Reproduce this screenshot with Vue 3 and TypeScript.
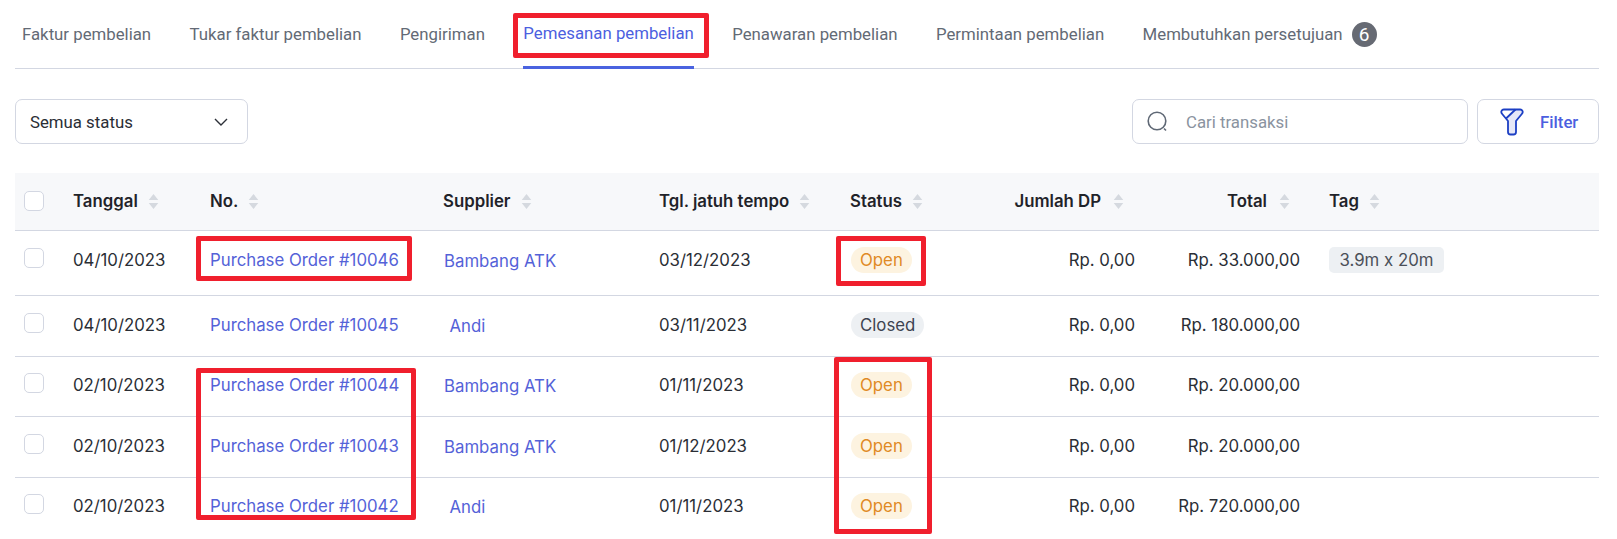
<script setup lang="ts">
interface Order {
  date: string
  no: string
  supplier: string
  indent: boolean
  due: string
  status: 'Open' | 'Closed'
  dp: string
  total: string
  tag?: string
}

const tabs = [
  { label: 'Faktur pembelian' },
  { label: 'Tukar faktur pembelian' },
  { label: 'Pengiriman' },
  { label: 'Pemesanan pembelian', active: true },
  { label: 'Penawaran pembelian' },
  { label: 'Permintaan pembelian' },
  { label: 'Membutuhkan persetujuan', count: 6 },
]

const columns = [
  { label: 'Tanggal', cls: 'c-date' },
  { label: 'No.', cls: 'c-no' },
  { label: 'Supplier', cls: 'c-supplier' },
  { label: 'Tgl. jatuh tempo', cls: 'c-due' },
  { label: 'Status', cls: 'c-status' },
  { label: 'Jumlah DP', cls: 'c-dp num' },
  { label: 'Total', cls: 'c-total num' },
  { label: 'Tag', cls: 'c-tag' },
]

const orders: Order[] = [
  { date: '04/10/2023', no: 'Purchase Order #10046', supplier: 'Bambang ATK', indent: false, due: '03/12/2023', status: 'Open', dp: 'Rp. 0,00', total: 'Rp. 33.000,00', tag: '3.9m x 20m' },
  { date: '04/10/2023', no: 'Purchase Order #10045', supplier: 'Andi', indent: true, due: '03/11/2023', status: 'Closed', dp: 'Rp. 0,00', total: 'Rp. 180.000,00' },
  { date: '02/10/2023', no: 'Purchase Order #10044', supplier: 'Bambang ATK', indent: false, due: '01/11/2023', status: 'Open', dp: 'Rp. 0,00', total: 'Rp. 20.000,00' },
  { date: '02/10/2023', no: 'Purchase Order #10043', supplier: 'Bambang ATK', indent: false, due: '01/12/2023', status: 'Open', dp: 'Rp. 0,00', total: 'Rp. 20.000,00' },
  { date: '02/10/2023', no: 'Purchase Order #10042', supplier: 'Andi', indent: true, due: '01/11/2023', status: 'Open', dp: 'Rp. 0,00', total: 'Rp. 720.000,00' },
]

// red markers drawn over the screenshot
const marks = [
  { cls: 'm-tab' },
  { cls: 'm-po1' },
  { cls: 'm-open1' },
  { cls: 'm-po2' },
  { cls: 'm-open2' },
]
</script>

<template>
  <div class="page">
    <nav class="tabs">
      <a v-for="t in tabs" :key="t.label" class="tab" :class="{ active: t.active }">
        {{ t.label }}
        <span v-if="t.count" class="count">{{ t.count }}</span>
      </a>
    </nav>

    <div class="toolbar">
      <div class="select">
        <span>Semua status</span>
        <svg width="16" height="16" viewBox="0 0 16 16" fill="none" stroke="#2c3038" stroke-width="1.4">
          <path d="M2 5l6 6 6-6" />
        </svg>
      </div>
      <div class="search">
        <svg width="24" height="24" viewBox="0 0 24 24" fill="none" stroke="#5f6875" stroke-width="1.6">
          <circle cx="10" cy="11" r="8.800" />
          <path d="M17 18.500l2 2" />
        </svg>
        <span>Cari transaksi</span>
      </div>
      <button type="button" class="filter">
        <svg width="24" height="28" viewBox="0 0 24 28" fill="none" stroke="#1c3fc4" stroke-width="1.800" stroke-linejoin="round">
          <path fill="#e6e8f8" stroke="none" d="M15.500 1.500H20a2.500 2.500 0 0 1 2 4.200L16 13v11a2.500 2.500 0 0 1-2.500 2.500h-3A2.500 2.500 0 0 1 8 24V13L6 10.500z" />
          <path d="M4 1.500h16a2.500 2.500 0 0 1 2 4.200L16 13v11a2.500 2.500 0 0 1-2.500 2.500h-3A2.500 2.500 0 0 1 8 24V13L2 5.700a2.500 2.500 0 0 1 2-4.200z" />
          <path d="M15.500 1.500L6 10.500" />
        </svg>
        <span>Filter</span>
      </button>
    </div>

    <table class="orders">
      <thead>
        <tr>
          <th class="c-check"><span class="check"></span></th>
          <th v-for="c in columns" :key="c.label" :class="c.cls">
            <span class="head">
              {{ c.label }}
              <svg class="sort" width="11" height="17" viewBox="0 0 10 16" fill="#d5d9df">
                <path d="M5 1l4.500 5.500H.5zM5 15L.5 9.500h9z" />
              </svg>
            </span>
          </th>
        </tr>
      </thead>
      <tbody>
        <tr v-for="o in orders" :key="o.no">
          <td class="c-check"><span class="check"></span></td>
          <td>{{ o.date }}</td>
          <td class="link">{{ o.no }}</td>
          <td class="link supplier" :class="{ indent: o.indent }">{{ o.supplier }}</td>
          <td>{{ o.due }}</td>
          <td><span class="badge" :class="o.status.toLowerCase()">{{ o.status }}</span></td>
          <td class="num dp">{{ o.dp }}</td>
          <td class="num">{{ o.total }}</td>
          <td class="tags"><span v-if="o.tag" class="tag">{{ o.tag }}</span></td>
        </tr>
      </tbody>
    </table>

    <span v-for="m in marks" :key="m.cls" class="mark" :class="m.cls"></span>
  </div>
</template>

<style>
body {
  background: #fff;
}
</style>

<style scoped>
.page {
  position: relative;
  height: 539px;
  padding: 0 18px 0 15px;
  overflow: hidden;
  font-family: Inter, "Liberation Sans", sans-serif;
  font-size: 16.8px;
  color: #2a2e35;
}

.tabs {
  display: flex;
  height: 69px;
  padding-left: 7px;
  gap: 38.4px;
  border-bottom: 1px solid #d3d7e2;
  font-family: Roboto, "Liberation Sans", sans-serif;
  box-sizing: border-box;
}

.tab {
  display: flex;
  align-items: center;
  gap: 9px;
  height: 69px;
  box-sizing: border-box;
  padding-bottom: 1px;
  font-size: 16.8px;
  color: #636a75;
  white-space: nowrap;
}

.tab.active {
  color: #4c5fe0;
  border-bottom: 3px solid #4a63e0;
  padding-bottom: 0;
}

.count {
  display: inline-flex;
  align-items: center;
  justify-content: center;
  width: 25px;
  height: 25px;
  border-radius: 50%;
  background: #666a73;
  color: #fff;
  font-size: 19px;
}

.toolbar {
  display: flex;
  gap: 9px;
  margin-top: 30px;
  height: 45px;
  font-family: Roboto, "Liberation Sans", sans-serif;
  font-size: 16.8px;
}

.select,
.search,
.filter {
  display: flex;
  align-items: center;
  box-sizing: border-box;
  height: 45px;
  background: #fff;
  border: 1px solid #d3d7e2;
  border-radius: 7px;
}

.select {
  width: 233px;
  margin-right: auto;
  justify-content: space-between;
  padding: 0 18px 0 14px;
  color: #2a2e35;
}

.search {
  width: 336px;
  padding: 0 14px;
  gap: 15px;
  color: #8a93a0;
}

.filter {
  width: 122px;
  padding: 0 0 0 22px;
  gap: 16px;
  font: inherit;
  font-weight: 500;
  color: #4c5fe0;
}

.orders {
  width: 1584px;
  margin-top: 29px;
  border-collapse: collapse;
  table-layout: fixed;
}

th {
  height: 57px;
  padding: 0 15px;
  background: #f7f8fa;
  border-bottom: 1px solid #d3d7e2;
  text-align: left;
  font-weight: 600;
  color: #1f2329;
}

td {
  box-sizing: border-box;
  height: 60px;
  padding: 0 15px 2px;
  border-bottom: 1px solid #d3d7e2;
  white-space: nowrap;
}

tbody tr:first-child td {
  height: 65px;
  padding-bottom: 6px;
}

tbody tr:nth-child(2) td,
tbody tr:nth-child(4) td {
  height: 61px;
}

tbody tr:last-child td {
  border-bottom: none;
}

th.c-check,
td.c-check {
  width: 43px;
  padding: 0 0 0 9px;
  box-sizing: border-box;
}

tbody tr:first-child td.c-check {
  padding-bottom: 4px;
}

.c-date { width: 137px; box-sizing: border-box; }
.c-no { width: 234px; box-sizing: border-box; }
.c-supplier { width: 215px; box-sizing: border-box; padding-left: 14px; }
.c-due { width: 192px; box-sizing: border-box; }
.c-status { width: 147px; box-sizing: border-box; padding-left: 14px; }
.c-dp { width: 166px; box-sizing: border-box; }
.c-total { width: 166px; box-sizing: border-box; }
.c-tag { box-sizing: border-box; padding-left: 14px; }

.num {
  text-align: right;
}

th.num {
  padding-right: 25px;
}

th.num .head {
  gap: 12px;
}

td.dp {
  padding-right: 14px;
}

td.tags {
  padding-left: 14px;
}

.head {
  display: inline-flex;
  align-items: center;
  gap: 10px;
}

.sort {
  flex: none;
}

.check {
  display: block;
  width: 20px;
  height: 20px;
  box-sizing: border-box;
  border: 1px solid #d3d7e2;
  border-radius: 5px;
  background: #fff;
  margin-bottom: 6px;
}

th .check {
  margin-bottom: 0;
}

.link {
  color: #5462d8;
}

td.supplier {
  padding-top: 2px;
  padding-left: 15px;
}

td.supplier.indent {
  padding-left: 20.5px;
}

.badge {
  display: inline-block;
  padding: 0 9px;
  line-height: 26px;
  border-radius: 13px;
}

.badge.open {
  background: #fdf3e0;
  color: #e08a24;
}

.badge.closed {
  background: #edf0f3;
  color: #3d4350;
}

.tag {
  display: inline-block;
  padding: 0 10.5px;
  line-height: 26px;
  border-radius: 5px;
  background: #edf0f3;
  color: #4a4f58;
}

.mark {
  position: absolute;
  box-sizing: border-box;
  border: 5px solid #f01f2d;
  border-radius: 2px;
}

.m-tab { left: 513px; top: 13px; width: 196px; height: 45px; }
.m-po1 { left: 196px; top: 236px; width: 216px; height: 45px; }
.m-open1 { left: 836px; top: 236px; width: 90px; height: 50px; }
.m-po2 { left: 196px; top: 368px; width: 220px; height: 152px; }
.m-open2 { left: 834px; top: 357px; width: 98px; height: 177px; }
</style>
